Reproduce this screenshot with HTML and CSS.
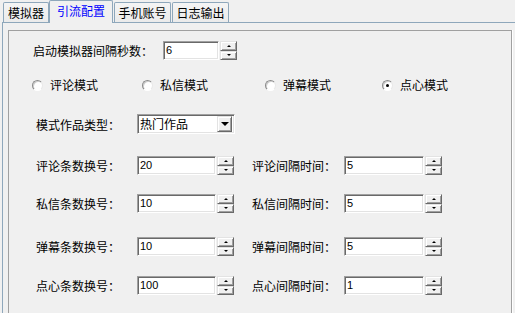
FILE: index.html
```html
<!DOCTYPE html>
<html>
<head>
<meta charset="utf-8">
<link rel="stylesheet" href="styles.css">
</head>
<body>
<div class="window">
  <div class="tabs">
    <div class="tab tab-1">模拟器</div>
    <div class="tab tab-active">引流配置</div>
    <div class="tab tab-3">手机账号</div>
    <div class="tab tab-4">日志输出</div>
  </div>
  <div class="panel">
    <div class="group">
      <div class="row-start">
        <span class="label label-start">启动模拟器间隔秒数：</span>
        <div class="edit edit-short">6</div>
        <div class="updown"><span class="btn"><i class="arr-up"></i></span><span class="btn"><i class="arr-down"></i></span></div>
      </div>

      <div class="radios">
        <label class="radio"><span class="circle"></span>评论模式</label>
        <label class="radio"><span class="circle"></span>私信模式</label>
        <label class="radio"><span class="circle"></span>弹幕模式</label>
        <label class="radio"><span class="circle checked"></span>点心模式</label>
      </div>

      <div class="row-combo">
        <span class="label label-left">模式作品类型：</span>
        <div class="combo">
          <span class="combo-text">热门作品</span>
          <span class="combo-btn"><i class="arr-drop"></i></span>
        </div>
      </div>

      <div class="row row-1">
        <span class="label label-left">评论条数换号：</span>
        <div class="edit edit-left">20</div>
        <div class="updown"><span class="btn"><i class="arr-up"></i></span><span class="btn"><i class="arr-down"></i></span></div>
        <span class="label label-right">评论间隔时间：</span>
        <div class="edit edit-right">5</div>
        <div class="updown"><span class="btn"><i class="arr-up"></i></span><span class="btn"><i class="arr-down"></i></span></div>
      </div>

      <div class="row row-2">
        <span class="label label-left">私信条数换号：</span>
        <div class="edit edit-left">10</div>
        <div class="updown"><span class="btn"><i class="arr-up"></i></span><span class="btn"><i class="arr-down"></i></span></div>
        <span class="label label-right">私信间隔时间：</span>
        <div class="edit edit-right">5</div>
        <div class="updown"><span class="btn"><i class="arr-up"></i></span><span class="btn"><i class="arr-down"></i></span></div>
      </div>

      <div class="row row-3">
        <span class="label label-left">弹幕条数换号：</span>
        <div class="edit edit-left">10</div>
        <div class="updown"><span class="btn"><i class="arr-up"></i></span><span class="btn"><i class="arr-down"></i></span></div>
        <span class="label label-right">弹幕间隔时间：</span>
        <div class="edit edit-right">5</div>
        <div class="updown"><span class="btn"><i class="arr-up"></i></span><span class="btn"><i class="arr-down"></i></span></div>
      </div>

      <div class="row row-4">
        <span class="label label-left">点心条数换号：</span>
        <div class="edit edit-left">100</div>
        <div class="updown"><span class="btn"><i class="arr-up"></i></span><span class="btn"><i class="arr-down"></i></span></div>
        <span class="label label-right">点心间隔时间：</span>
        <div class="edit edit-right">1</div>
        <div class="updown"><span class="btn"><i class="arr-up"></i></span><span class="btn"><i class="arr-down"></i></span></div>
      </div>
    </div>
  </div>
</div>
</body>
</html>
```

FILE: styles.css
```css
* { box-sizing: border-box; }

html, body {
  margin: 0;
  padding: 0;
  background: #f0f0f0;
}

body {
  font-family: "Noto Sans CJK SC", "Liberation Sans", sans-serif;
  font-size: 12px;
  color: #000;
}

.window {
  width: 515px;
  height: 313px;
  overflow: hidden;
  background: #f0f0f0;
}

/* ---------- tabs ---------- */
.tabs {
  display: flex;
  align-items: flex-end;
  height: 22px;
  padding-left: 3px;
  position: relative;
  z-index: 2;
}

.tab {
  height: 20px;
  border: 1px solid #8ea7bb;
  border-bottom: none;
  border-radius: 2px 2px 0 0;
  background: linear-gradient(#f4f4f4, #ebebeb);
  display: flex;
  align-items: center;
  justify-content: center;
  font-size: 12px;
  line-height: 1;
  padding-top: 1px;
}

.tab-1 { width: 46px; }
.tab-3 { width: 57px; margin-left: 1px; }
.tab-4 { width: 57px; margin-left: 1px; }

.tab-active {
  width: 64px;
  height: 23px;
  margin-bottom: -1px;
  background: #f0f0f0;
  color: #0000ff;
  padding-top: 0;
  padding-bottom: 2px;
}

/* ---------- panel ---------- */
.panel {
  margin-left: 2px;
  border-left: 1px solid #8ea7bb;
  border-top: 1px solid #8ea7bb;
  padding: 7px 0 0 5px;
  height: 300px;
}

.group {
  width: 504px;
  height: 300px;
  border: 1px solid #a0a0a0;
  box-shadow: 1px 0 0 #ffffff;
}

.label {
  display: inline-block;
  white-space: nowrap;
  line-height: 19px;
}

/* ---------- edit + spinner ---------- */
.edit {
  height: 19px;
  background: #fff;
  border-style: solid;
  border-width: 1px;
  border-color: #a0a0a0 #ffffff #ffffff #a0a0a0;
  box-shadow: inset 1px 1px 0 #696969, inset -1px -1px 0 #e3e3e3;
  font-family: "Liberation Sans", sans-serif;
  font-size: 11px;
  line-height: 17px;
  padding-left: 2px;
}

.edit-short { width: 56px; }
.edit-left { width: 79px; }
.edit-right { width: 80px; }

.updown {
  width: 17px;
  height: 19px;
  margin-left: 1px;
  display: flex;
  flex-direction: column;
}

.btn {
  flex: 1;
  background: #f0f0f0;
  border-style: solid;
  border-width: 1px;
  border-color: #e3e3e3 #696969 #696969 #e3e3e3;
  box-shadow: inset 1px 1px 0 #ffffff, inset -1px -1px 0 #a0a0a0;
  display: flex;
  align-items: center;
  justify-content: center;
}

.arr-up {
  width: 0;
  height: 0;
  border-left: 2px solid transparent;
  border-right: 2px solid transparent;
  border-bottom: 2px solid #000;
}

.arr-down {
  width: 0;
  height: 0;
  border-left: 2px solid transparent;
  border-right: 2px solid transparent;
  border-top: 2px solid #000;
}

/* ---------- first row ---------- */
.row-start {
  display: flex;
  margin-top: 10px;
  padding-left: 24px;
  height: 19px;
}

.label-start { width: 130px; }

/* ---------- radios ---------- */
.radios {
  display: grid;
  grid-template-columns: 110px 123px 117px auto;
  margin-top: 18px;
  padding-left: 23px;
  height: 14px;
}

.radio {
  display: flex;
  align-items: center;
  gap: 7px;
  line-height: 14px;
}

.circle {
  width: 11px;
  height: 11px;
  border-radius: 50%;
  background: #fff;
  border: 1px solid;
  border-color: #8a8a8a #e8e8e8 #ffffff #8a8a8a;
  box-shadow: inset 1px 1px 0 #cfcfcf;
  position: relative;
  flex: none;
}

.circle.checked::after {
  content: "";
  position: absolute;
  left: 3px;
  top: 3px;
  width: 3px;
  height: 3px;
  border-radius: 50%;
  background: #000;
}

/* ---------- combo row ---------- */
.row-combo {
  display: flex;
  margin-top: 22px;
  padding-left: 27px;
  height: 20px;
  align-items: center;
}

.label-left { width: 101px; }
.label-right { width: 92px; margin-left: 18px; }

.combo {
  width: 98px;
  height: 20px;
  background: #fff;
  border-style: solid;
  border-width: 1px;
  border-color: #a0a0a0 #ffffff #ffffff #a0a0a0;
  box-shadow: inset 1px 1px 0 #696969, inset -1px -1px 0 #e3e3e3;
  display: flex;
  align-items: center;
  padding: 2px;
}

.combo-text {
  flex: 1;
  line-height: 16px;
  padding-left: 0;
}

.combo-btn {
  width: 15px;
  height: 16px;
  background: #f0f0f0;
  border-style: solid;
  border-width: 1px;
  border-color: #e3e3e3 #696969 #696969 #e3e3e3;
  box-shadow: inset 1px 1px 0 #ffffff, inset -1px -1px 0 #a0a0a0;
  display: flex;
  align-items: center;
  justify-content: center;
}

.arr-drop {
  width: 0;
  height: 0;
  border-left: 4px solid transparent;
  border-right: 4px solid transparent;
  border-top: 4px solid #000;
}

/* ---------- data rows ---------- */
.row {
  display: flex;
  padding-left: 27px;
  height: 19px;
}

.row-1 { margin-top: 22px; }
.row-2 { margin-top: 19px; }
.row-3 { margin-top: 24px; }
.row-4 { margin-top: 20px; }
```
